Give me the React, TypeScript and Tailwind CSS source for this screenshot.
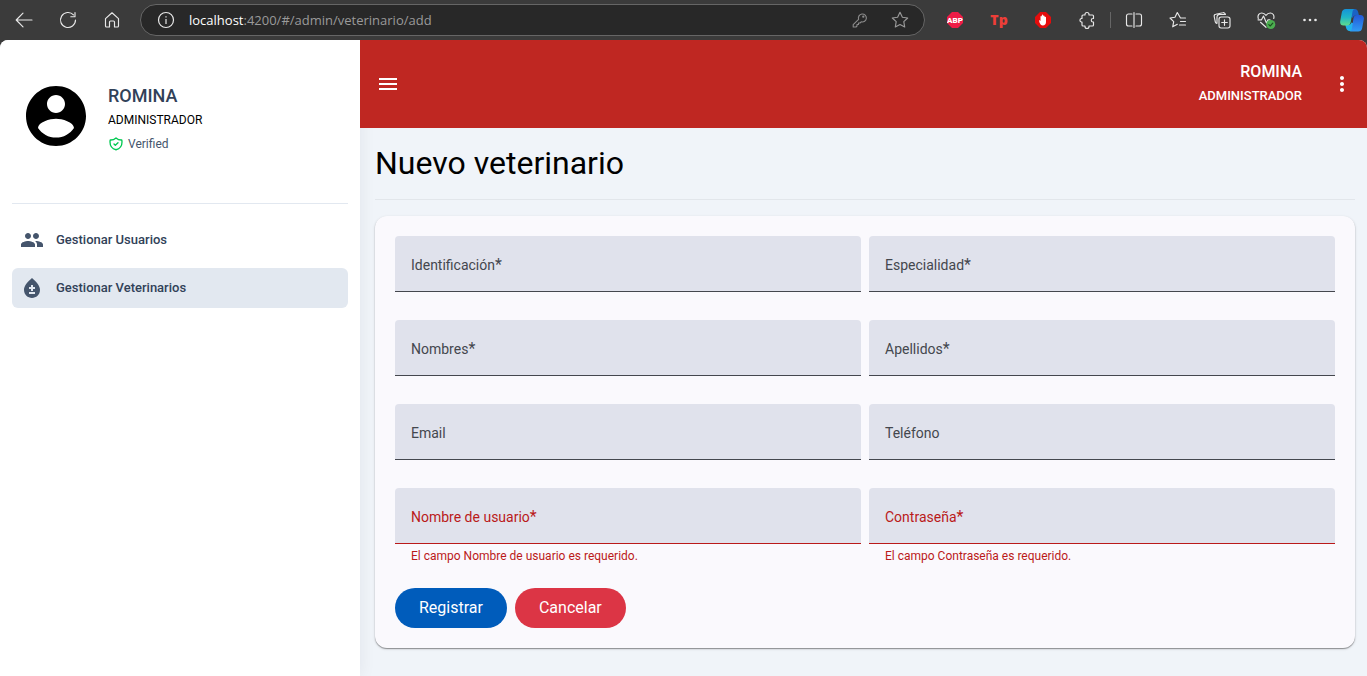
import type { ReactNode } from "react";
import { MdBloodtype, MdMenu, MdMoreVert, MdPeople } from "react-icons/md";
import { HiOutlineShieldCheck } from "react-icons/hi";

function LineIcon({ children }: { children: ReactNode }) {
  return (
    <svg viewBox="0 0 20 20" className="size-5" fill="none" stroke="currentColor" strokeWidth="1.15" strokeLinecap="round" strokeLinejoin="round" aria-hidden="true">
      {children}
    </svg>
  );
}

function BarButton({ label, children }: { label: string; children: ReactNode }) {
  return (
    <button type="button" aria-label={label} className="flex h-8 w-11 shrink-0 items-center justify-center text-[#e8e8e8]">
      {children}
    </button>
  );
}

const OCTAGON = "M5 0h6l5 5v6l-5 5H5l-5-5V5z";
const STAR = "M10 2.3l2.4 4.9 5.3.8-3.9 3.7.9 5.3-4.7-2.5L5.3 17l.9-5.3L2.3 8l5.3-.8z";

function BrowserBar() {
  return (
    <div className="flex h-10 shrink-0 items-center bg-[#3b3b3b] pl-[2px]">
      <BarButton label="Atrás">
        <LineIcon><path d="M18 10H2.300M9 3.200L2.200 10 9 16.800" /></LineIcon>
      </BarButton>
      <BarButton label="Actualizar">
        <LineIcon><path d="M17.500 10a7.500 7.500 0 1 1-2-5.100M17 2.500v4.200h-4.200" /></LineIcon>
      </BarButton>
      <BarButton label="Inicio">
        <LineIcon><path d="M3.500 8.600L10 2.800l6.500 5.800V16a1 1 0 0 1-1 1h-3v-5a1 1 0 0 0-1-1h-3a1 1 0 0 0-1 1v5h-3a1 1 0 0 1-1-1z" /></LineIcon>
      </BarButton>
      <div className="mr-2 ml-[6px] flex h-8 min-w-0 flex-1 items-center rounded-full border border-[#666] bg-[#282828] pr-1 pl-4 text-[#e8e8e8]">
        <svg viewBox="0 0 18 18" className="size-[18px] shrink-0" fill="none" stroke="currentColor" strokeWidth="1.200" aria-hidden="true">
          <circle cx="9" cy="9" r="7.500" />
          <path d="M9 8v5M9 5.200v1.300" />
        </svg>
        <p className="ml-[14px] min-w-0 flex-1 truncate font-['Open_Sans',sans-serif] text-[13px] leading-5 text-[#9a9a9a]">
          <span className="text-white">localhost</span>:4200/#/admin/veterinario/add
        </p>
        <button type="button" aria-label="Contraseñas" className="flex w-10 justify-center text-[#8c8c8c]">
          <svg viewBox="0 0 16 16" className="size-4" fill="none" stroke="currentColor" strokeWidth="1.100" strokeLinejoin="round" aria-hidden="true">
            <path d="M6.600 7.300a4 4 0 1 1 2.600 2.500L8 11H6.500v1.500H5V14l-1 1H1.200v-2.400z" />
            <circle cx="11.300" cy="4.700" r=".6" />
          </svg>
        </button>
        <button type="button" aria-label="Favorito" className="flex w-10 justify-center text-[#9a9a9a]">
          <svg viewBox="0 0 20 20" className="size-5" fill="none" stroke="currentColor" strokeWidth="1.150" strokeLinejoin="round" aria-hidden="true">
            <path d={STAR} />
          </svg>
        </button>
      </div>
      <BarButton label="Adblock Plus">
        <svg viewBox="0 0 16 16" className="size-4" aria-hidden="true">
          <path d={OCTAGON} fill="#ee1c46" />
          <text x="8" y="11" textAnchor="middle" fontFamily="Roboto, sans-serif" fontWeight="900" fontSize="8" fill="#fff">ABP</text>
        </svg>
      </BarButton>
      <BarButton label="Tp">
        <span className="font-['Open_Sans',sans-serif] text-sm leading-4 font-extrabold text-[#ee3e38]">Tp</span>
      </BarButton>
      <BarButton label="AdBlock">
        <svg viewBox="0 0 16 16" className="size-4" aria-hidden="true">
          <path d={OCTAGON} fill="#e40d0d" />
          <path d="M4 8.300c.5-.4 1.100 0 1.500.6V4.500c0-.8 1.200-.8 1.300 0V3.200c.1-.9 1.300-.9 1.400 0v.9c.1-.8 1.300-.7 1.400.1v1c.2-.7 1.300-.6 1.400.1v4.600c0 2.300-1.200 3.500-3.200 3.500-1.700 0-2.400-1-3.300-2.900z" fill="#fff" />
        </svg>
      </BarButton>
      <BarButton label="Extensiones">
        <LineIcon>
          <path d="M8 5V4.500a2 2 0 0 1 4 0V5h3.500a1 1 0 0 1 1 1v2.500H16a1.700 1.700 0 0 0 0 3.500h.5v3a1 1 0 0 1-1 1H12v.5a2 2 0 0 1-4 0V16H6a1 1 0 0 1-1-1v-3h-.7a1.800 1.800 0 0 1 0-3.500H5V6a1 1 0 0 1 1-1z" />
        </LineIcon>
      </BarButton>
      <div className="mx-px h-4 w-px bg-[#666]" />
      <BarButton label="Pantalla dividida">
        <LineIcon><path d="M8 4H4.500a2 2 0 0 0-2 2v8a2 2 0 0 0 2 2H8M12 4h3.500a2 2 0 0 1 2 2v8a2 2 0 0 1-2 2H12M10 2.500v15" /></LineIcon>
      </BarButton>
      <BarButton label="Favoritos">
        <LineIcon><path d="M17.500 8h-5L9.300 2.500 7 7.200l-5 .8 3.700 3.600-1 5.200 4.600-2.500M12.500 11.500h5M11.500 15h6" /></LineIcon>
      </BarButton>
      <BarButton label="Colecciones">
        <LineIcon>
          <rect x="7" y="7" width="11" height="11" rx="2.200" />
          <path d="M12.500 9.700v5.600M9.700 12.500h5.600M4.800 13.500a2 2 0 0 1-1.500-1.600L2.200 6.500A2 2 0 0 1 3.800 4.200l7-1.500a2 2 0 0 1 2.500 1.500M5 13V7a2.500 2.500 0 0 1 2.500-2.500h6" />
        </LineIcon>
      </BarButton>
      <BarButton label="Rendimiento">
        <LineIcon>
          <path d="M2.300 8.500C1.200 5 3.500 3 5.800 3c2 0 3.200 1 4.200 2.300C11 4 12.200 3 14.200 3c2.500 0 4.500 2.200 3.500 5.500M2 9.800h3.500L7.500 6l3 7 1.500-3.200h2M4.500 12.300l5.500 5" />
          <circle cx="14.800" cy="14.500" r="4.500" fill="#4caf50" stroke="none" />
          <path d="M12.800 14.600l1.400 1.400 2.600-2.800" stroke="#1d4d20" />
        </LineIcon>
      </BarButton>
      <BarButton label="Más">
        <svg viewBox="0 0 20 20" className="size-5" fill="currentColor" aria-hidden="true">
          <circle cx="4.500" cy="10" r="1.300" /><circle cx="10" cy="10" r="1.300" /><circle cx="15.500" cy="10" r="1.300" />
        </svg>
      </BarButton>
      <button type="button" aria-label="Copilot" className="mr-[3px] ml-2 shrink-0">
        <svg viewBox="0 0 24 24" className="size-6" aria-hidden="true">
          <defs>
            <linearGradient id="cpA" x1="0" y1="0" x2="0" y2="1">
              <stop offset="0" stopColor="#1593d8" /><stop offset=".5" stopColor="#1fb5c8" /><stop offset="1" stopColor="#5fdc8c" />
            </linearGradient>
            <linearGradient id="cpB" x1="0" y1="0" x2="0" y2="1">
              <stop offset="0" stopColor="#2458d6" /><stop offset="1" stopColor="#2f9cf5" />
            </linearGradient>
          </defs>
          <path d="M10 1h4.500C17 1 17.800 2.300 18.300 4.500L19 7.500h-3c-2 0-3 1-3.400 2.500L10 8z" fill="#1b62c4" />
          <path d="M14 23H9.500C7.500 23 6.600 21.500 6 19.500L5.300 17H8c2 0 3-1 3.400-2.500l3 1z" fill="#22b3ea" />
          <path d="M5.800 1H15c-1.700.2-2.300 1.500-2.600 3.200l-1.600 9.600c-.4 2.400-1.600 3.700-3.700 3.700H3.500C1 17.500-.2 15.800.2 13.300L1.800 4.600C2.200 2.300 3.600 1 5.800 1z" fill="url(#cpA)" />
          <path d="M18.200 23.500H9.500c1.700-.3 2.200-1.700 2.500-3.400l1.400-9.400c.3-2.400 1.600-3.700 3.700-3.700h3.400c2.500 0 3.700 1.700 3.300 4.200l-1.600 8.700c-.4 2.300-1.800 3.600-4 3.600z" fill="url(#cpB)" />
        </svg>
      </button>
    </div>
  );
}

function Sidebar() {
  return (
    <aside className="z-10 w-[360px] shrink-0 bg-white px-3 shadow-[0_0_16px_rgba(15,23,42,0.07)]">
      <div className="flex h-[164px] items-start gap-4 border-b border-slate-200 pt-10 pl-2">
        <svg viewBox="0 0 24 24" className="size-[72px] shrink-0" aria-hidden="true">
          <path d="M12 2C6.480 2 2 6.480 2 12s4.480 10 10 10 10-4.480 10-10S17.520 2 12 2zm0 3c1.660 0 3 1.340 3 3s-1.340 3-3 3-3-1.340-3-3 1.340-3 3-3zm0 14.200c-2.500 0-4.710-1.280-6-3.220.03-1.990 4-3.080 6-3.080 1.990 0 5.970 1.090 6 3.080-1.290 1.940-3.500 3.220-6 3.220z" />
        </svg>
        <div className="pt-1">
          <p className="text-lg leading-6 font-medium text-slate-700">ROMINA</p>
          <p className="text-xs leading-6 text-black">ADMINISTRADOR</p>
          <p className="flex items-center gap-1 text-xs leading-6 text-slate-600">
            <HiOutlineShieldCheck className="size-4 text-green-500" aria-hidden="true" />
            Verified
          </p>
        </div>
      </div>
      <nav className="mt-4 flex flex-col gap-2 text-[13px] font-medium text-slate-700">
        <a href="#/admin/usuario" className="flex h-10 items-center gap-3 rounded-md px-2">
          <MdPeople className="size-6 text-slate-600" aria-hidden="true" />
          Gestionar Usuarios
        </a>
        <a href="#/admin/veterinario" aria-current="page" className="flex h-10 items-center gap-3 rounded-md bg-slate-200 px-2">
          <MdBloodtype className="size-6 text-slate-600" aria-hidden="true" />
          Gestionar Veterinarios
        </a>
      </nav>
    </aside>
  );
}

type FieldProps = { id: string; label: string; type?: string; required?: boolean; error?: string };

const FIELDS: FieldProps[] = [
  { id: "identificacion", label: "Identificación", required: true },
  { id: "especialidad", label: "Especialidad", required: true },
  { id: "nombres", label: "Nombres", required: true },
  { id: "apellidos", label: "Apellidos", required: true },
  { id: "email", label: "Email", type: "email" },
  { id: "telefono", label: "Teléfono", type: "tel" },
  { id: "usuario", label: "Nombre de usuario", required: true, error: "El campo Nombre de usuario es requerido." },
  { id: "contrasena", label: "Contraseña", type: "password", required: true, error: "El campo Contraseña es requerido." },
];

function Field({ id, label, type = "text", required, error }: FieldProps) {
  return (
    <div className="flex flex-col">
      <div className={`grid h-14 items-center rounded-t border-b bg-[#e0e2ec] ${error ? "border-[#ba1a1a]" : "border-[#44474e]"}`}>
        <input
          id={id}
          type={type}
          required={required}
          aria-invalid={error ? true : undefined}
          aria-describedby={error ? `${id}-error` : undefined}
          className="peer col-start-1 row-start-1 h-full w-full bg-transparent px-4 pt-4 text-sm outline-none"
        />
        <label
          htmlFor={id}
          className={`pointer-events-none col-start-1 row-start-1 px-4 pt-[2px] text-sm peer-focus:invisible ${error ? "text-[#ba1a1a]" : "text-[#44474e]"}`}
        >
          {label}
          {required && <span className="text-base leading-none">*</span>}
        </label>
      </div>
      <p id={`${id}-error`} className="h-5 px-4 pt-[2px] text-xs leading-5 text-[#ba1a1a]">{error}</p>
    </div>
  );
}

export default function App() {
  return (
    <div className="flex min-h-screen flex-col bg-[#3b3b3b] font-['Roboto',sans-serif]">
      <BrowserBar />
      <div className="flex flex-1 overflow-hidden rounded-t-lg bg-[#f0f4f9]">
        <Sidebar />
        <div className="flex min-w-0 flex-1 flex-col">
          <header className="z-20 flex h-[88px] items-center justify-between bg-[#bf2722] pr-[13px] pl-4 text-white">
            <button type="button" aria-label="Menú"><MdMenu className="size-6" /></button>
            <div className="flex items-center gap-7">
              <div className="text-right font-medium">
                <p className="text-base leading-6">ROMINA</p>
                <p className="text-[13px] leading-6">ADMINISTRADOR</p>
              </div>
              <button type="button" aria-label="Opciones"><MdMoreVert className="size-6" /></button>
            </div>
          </header>
          <main className="flex-1 pt-4 pr-3 pl-[15px]">
            <h1 className="text-[32px] leading-[39px] text-black">Nuevo veterinario</h1>
            <hr className="my-4 border-[#e2e6eb]" />
            <form className="rounded-xl bg-[#faf9fd] p-5 shadow-[0_1px_1px_rgba(0,0,0,0.35),0_1px_3px_rgba(0,0,0,0.15)]">
              <div className="grid grid-cols-2 gap-2">
                {FIELDS.map((f) => <Field key={f.id} {...f} />)}
              </div>
              <div className="mt-6 flex gap-2 text-base text-white">
                <button type="submit" className="h-10 rounded-full bg-[#005cbb] px-6">Registrar</button>
                <button type="button" className="h-10 rounded-full bg-[#dc3545] px-6">Cancelar</button>
              </div>
            </form>
          </main>
        </div>
      </div>
    </div>
  );
}
